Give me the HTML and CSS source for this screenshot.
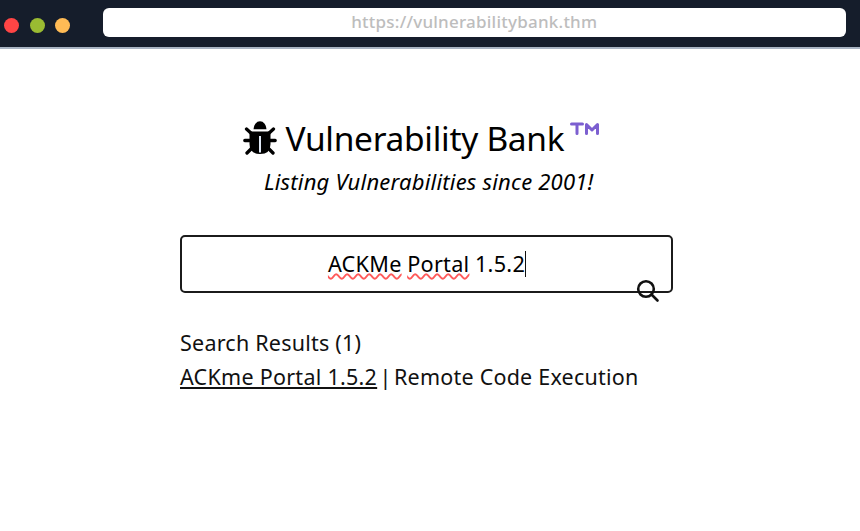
FILE: index.html
```html
<!DOCTYPE html>
<html lang="en">
<head>
<meta charset="utf-8">
<title>Vulnerability Bank</title>
<link rel="stylesheet" href="styles.css">
</head>
<body>
<header class="bar">
  <div class="dots"><i class="dot red"></i><i class="dot green"></i><i class="dot amber"></i></div>
  <div class="address"><span>https://vulnerabilitybank.thm</span></div>
</header>
<main class="page">
  <h1 class="brand">
    <svg class="bug" viewBox="0 0 34 34" aria-hidden="true">
      <path d="M10.500 8.300a6.500 8 0 0 1 13 0z"/>
      <path d="M6.500 10.500h21V23q0 10-10.500 10T6.500 23z"/>
      <path class="legs" d="M3.500 8l6 5.500M30.500 8l-6 5.500M1.800 19.500h8M32.200 19.500h-8M4 32l6-6M30 32l-6-6"/>
      <path class="split" d="M17 15v16.500"/>
    </svg>
    <span class="name">Vulnerability Bank</span>
    <svg class="tm" viewBox="0 0 30 13" role="img" aria-label="trademark"><path d="M1.500 2h11M7 2v9.500M16.500 11.500V2.500l5.500 5.500 5.500-5.500v9"/></svg>
  </h1>
  <p class="tagline">Listing Vulnerabilities since 2001!</p>
  <div class="search">
    <div class="query"><span class="typo">ACKMe</span><span class="typo">Portal</span><span>1.5.2</span><i class="caret"></i></div>
    <svg class="lens" viewBox="0 0 24 24" aria-hidden="true"><circle cx="10" cy="10" r="7.800"/><path d="M15.500 15.500l6 6"/></svg>
  </div>
  <section class="results">
    <div class="count">Search Results (1)</div>
    <div class="result"><a class="link">ACKme Portal 1.5.2</a><span class="rule">|</span><span class="rest">Remote Code Execution</span></div>
  </section>
</main>
</body>
</html>
```
FILE: styles.css
```css
* { box-sizing: border-box; }
body { margin: 0; height: 531px; overflow: hidden; background: #fff; color: #111; font-family: "Noto Sans", "Open Sans", sans-serif; }
.bar { display: flex; height: 49px; padding: 8px 14px 0 4px; background: #151d2b; border-bottom: 2px solid #a9b4c3; }
.dots { display: flex; gap: 10.5px; width: 98.5px; padding-top: 10px; }
.dot { width: 15px; height: 15px; border-radius: 50%; }
.red { background: #ff4545; }
.green { background: #9abb32; }
.amber { background: #ffbb55; }
.address { flex: 1; height: 29px; background: #fff; border-radius: 6px; text-align: center; color: #bdbdbd; font-size: 17px; font-weight: 500; letter-spacing: .23px; line-height: 27px; white-space: nowrap; }
.page { width: 493px; margin: 0 0 0 180px; }
.brand { display: flex; margin: 0; padding: 67px 0 0 63px; height: 117px; font-weight: 400; color: #000; }
.bug { width: 34px; height: 34px; margin-top: 5px; flex: none; }
.legs { fill: none; stroke: #000; stroke-width: 3.300; stroke-linecap: round; }
.split { stroke: #dfe8f5; stroke-width: 2; }
.name { width: 284px; margin-left: 8.500px; font-size: 33.500px; letter-spacing: -.3px; line-height: 44px; white-space: nowrap; }
.tm { width: 30px; height: 13px; margin-top: 6px; flex: none; fill: none; stroke: #7c5fd0; stroke-width: 3; stroke-linecap: round; stroke-linejoin: round; }
.tagline { margin: 0 0 0 84px; height: 69px; font-size: 22px; font-style: italic; letter-spacing: .2px; line-height: 30px; white-space: nowrap; color: #000; }
.search { position: relative; height: 58px; border: 2px solid #1b1b1b; border-radius: 5px; }
.query { display: flex; align-items: center; justify-content: center; height: 53px; gap: 5.500px; padding-left: 1px; font-size: 21.700px; letter-spacing: .25px; color: #000; }
.typo { text-decoration: underline wavy #ff5a5a 1.500px; text-underline-offset: 1px; text-decoration-skip-ink: none; }
.caret { width: 1px; height: 26px; margin-left: -5.500px; background: #111; }
.lens { position: absolute; right: 11px; bottom: -12px; width: 24px; height: 24px; fill: none; stroke: #111; stroke-width: 2.600; stroke-linecap: round; }
.results { margin-top: 33px; font-size: 21.500px; letter-spacing: .23px; line-height: 34px; white-space: nowrap; color: #111; }
.result { display: flex; }
.link { width: 197px; letter-spacing: .27px; text-decoration: underline 2px; text-underline-offset: 2px; text-decoration-skip-ink: none; }
.rule { width: 17px; padding-left: 2.500px; }
.rest { letter-spacing: .22px; }
```
